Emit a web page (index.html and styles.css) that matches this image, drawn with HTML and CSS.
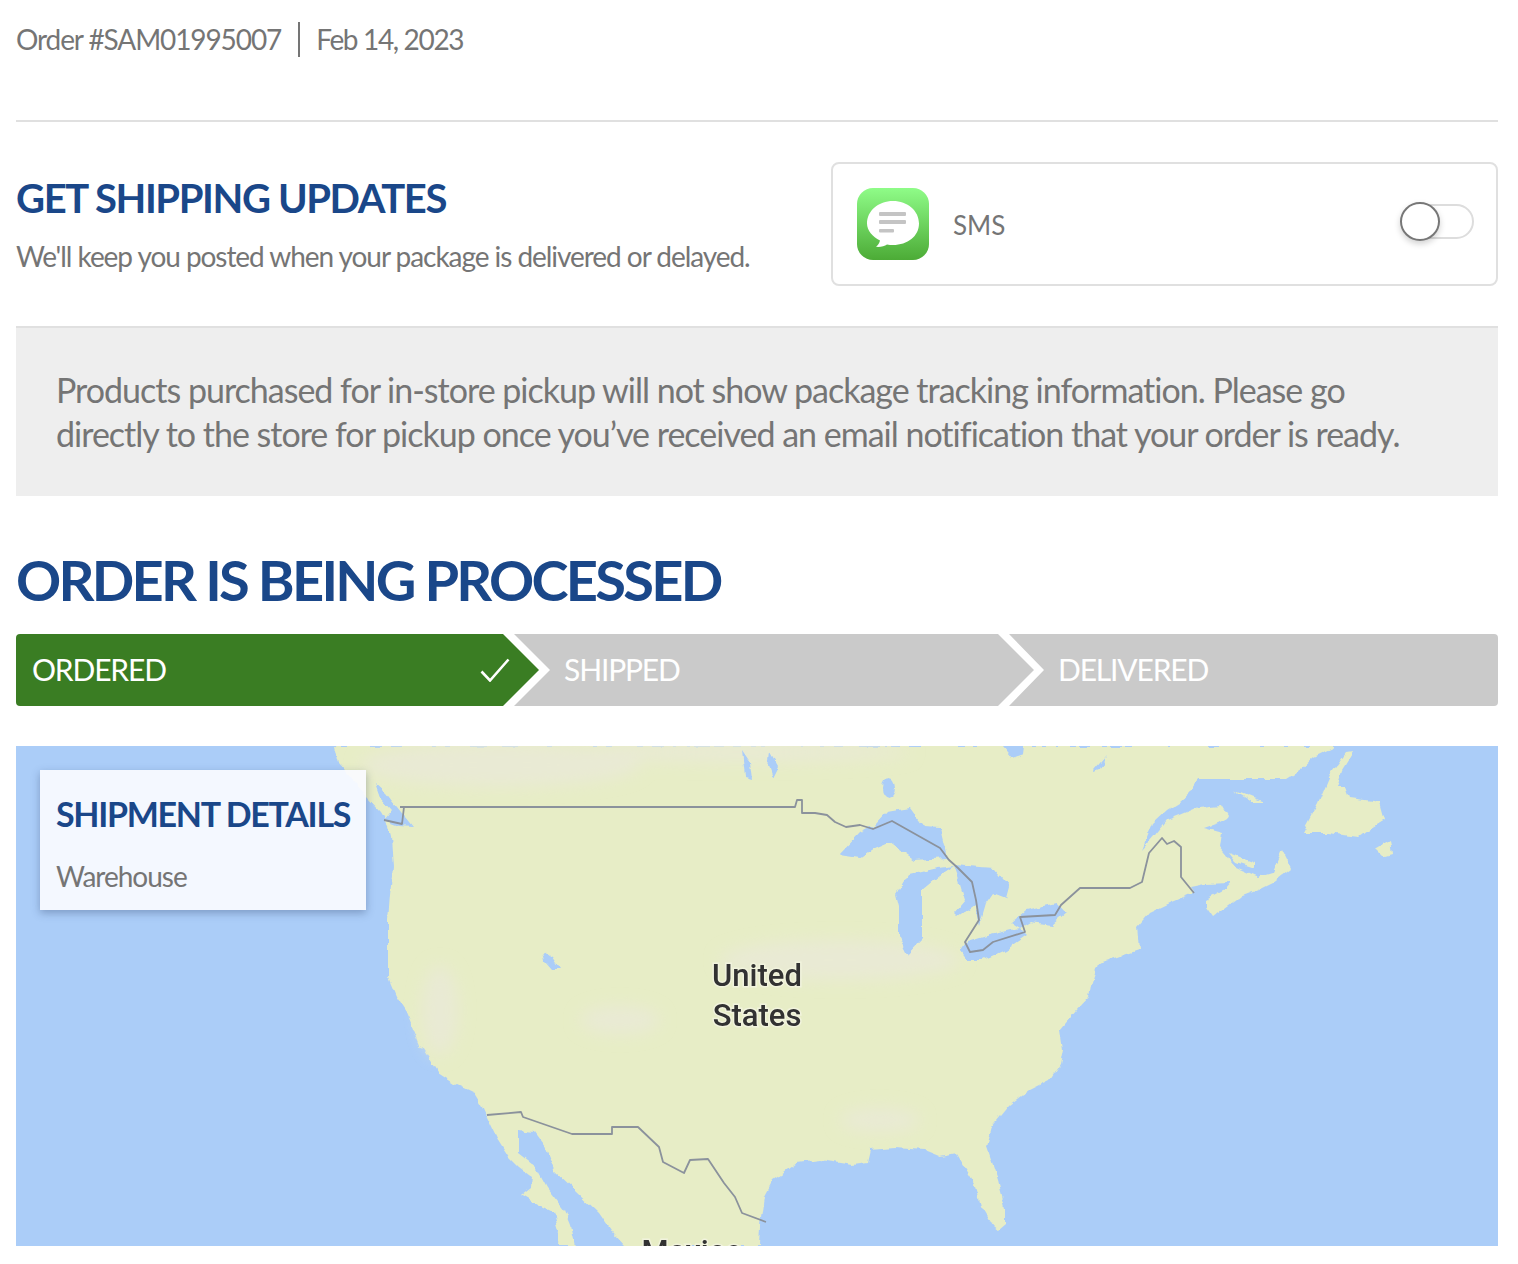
FILE: index.html
```html
<!DOCTYPE html>
<html lang="en">
<head>
<meta charset="utf-8">
<title>Order status</title>
<link rel="stylesheet" href="styles.css">
</head>
<body>
<main class="page">
  <header class="order-row">
    <span class="order-id">Order #SAM01995007</span>
    <span class="order-date">Feb 14, 2023</span>
  </header>

  <section class="updates">
    <div class="updates-text">
      <h2 class="updates-title">GET SHIPPING UPDATES</h2>
      <p class="updates-sub">We'll keep you posted when your package is delivered or delayed.</p>
    </div>
    <div class="sms-card">
      <svg class="sms-icon" viewBox="0 0 72 72" aria-hidden="true">
        <defs>
          <linearGradient id="smsGrad" x1="0" y1="0" x2="0" y2="1">
            <stop offset="0" stop-color="#8ffc88"/>
            <stop offset="1" stop-color="#4cab36"/>
          </linearGradient>
        </defs>
        <rect width="72" height="72" rx="16" fill="url(#smsGrad)"/>
        <path d="M36 13c14.500 0 26 9.800 26 22.500S50.500 57 36 57c-2 0-4-.2-6-.6-2.500 1.800-6.500 2.800-11 2.400 2-1.400 3.500-3.800 4-6.300C15.500 48.600 10 42.500 10 35.500 10 22.800 21.500 13 36 13z" fill="#fff"/>
        <rect x="22" y="24" width="27" height="4" rx="1" fill="#c4c4c4"/>
        <rect x="22" y="32" width="27" height="4" rx="1" fill="#c4c4c4"/>
        <rect x="22" y="41" width="15" height="3.500" rx="1" fill="#c4c4c4"/>
      </svg>
      <span class="sms-label">SMS</span>
      <span class="toggle"><span class="toggle-knob"></span></span>
    </div>
  </section>

  <p class="notice">Products purchased for in-store pickup will not show package tracking information. Please go directly to the store for pickup once you’ve received an email notification that your order is ready.</p>

  <h1 class="status-title">ORDER IS BEING PROCESSED</h1>

  <div class="stepper">
    <div class="step step-first">
      <span>ORDERED</span>
      <svg class="step-check" viewBox="0 0 30 24" aria-hidden="true"><path d="M1.500 13.500 10 22.500 28.500 1.500" fill="none" stroke="#fff" stroke-width="2.600"/></svg>
    </div>
    <div class="step step-mid"><span>SHIPPED</span></div>
    <div class="step step-last"><span>DELIVERED</span></div>
  </div>

  <div class="map">
    <svg class="map-art" viewBox="16 746 1482 500" aria-hidden="true">
      <defs>
        <filter id="soft" x="-5%" y="-5%" width="110%" height="110%">
          <feTurbulence type="fractalNoise" baseFrequency="0.09" numOctaves="2" seed="4" result="n"/>
          <feDisplacementMap in="SourceGraphic" in2="n" scale="7" xChannelSelector="R" yChannelSelector="G"/>
          <feGaussianBlur stdDeviation="0.7"/>
        </filter>
        <filter id="softer" x="-30%" y="-30%" width="160%" height="160%"><feGaussianBlur stdDeviation="8"/></filter>
        <filter id="line" x="-5%" y="-5%" width="110%" height="110%"><feGaussianBlur stdDeviation="0.6"/></filter>
      </defs>
      <g filter="url(#soft)">
        <path class="land" d="M335 746 339 763 352 778 366 797 380 812 388 826 391 837 393 867 390 895 388 920 388 960 388 977 396 996 407 1013 420 1045 438 1073 455 1084 474 1093 482 1106 487 1117 497 1138 509 1157 520 1168 532 1177 531 1187 521 1195 538 1205 554 1213 559 1230 558 1246 576 1246 571 1225 565 1210 547 1187 536 1167 518 1153 518 1130 534 1132 545 1147 554 1170 575 1190 599 1213 612 1232 625 1246 759 1246 760 1225 764 1197 773 1180 785 1172 797 1163 820 1160 840 1163 853 1165 868 1163 871 1150 895 1148 925 1150 940 1156 956 1153 966 1170 974 1183 980 1205 992 1225 998 1230 1005 1224 1005 1207 998 1180 987 1147 992 1127 1010 1105 1030 1090 1050 1080 1060 1065 1063 1050 1060 1030 1075 1012 1089 997 1091 985 1098 963 1115 958 1139 950 1137 927 1149 913 1170 903 1194 893 1190 887 1205 884 1231 883 1225 890 1206 900 1206 907 1213 917 1225 908 1240 897 1258 890 1272 883 1291 868 1282 850 1272 873 1259 877 1236 867 1220 847 1222 833 1204 828 1218 823 1229 817 1222 805 1199 807 1180 815 1167 820 1155 835 1142 850 1153 823 1167 810 1180 802 1190 793 1199 779 1240 779 1286 779 1300 770 1314 757 1337 746Z"/>
        <path class="land" d="M1302 833 1318 803 1330 775 1346 753 1353 752 1342 770 1337 787 1346 787 1350 798 1380 802 1385 820 1372 828 1360 837 1327 833Z"/>
        <path class="land" d="M1376 848 1390 840 1392 855 1385 857Z"/>
        <path class="land" d="M1233 790 1263 802 1252 802Z"/>
        <path class="land" d="M1229 853 1254 863 1254 868 1236 862Z"/>
      </g>
      <g class="tan" filter="url(#softer)">
        <ellipse cx="500" cy="765" rx="140" ry="22"/>
        <ellipse cx="740" cy="752" rx="170" ry="10"/>
        <ellipse cx="840" cy="960" rx="120" ry="20"/>
        <ellipse cx="440" cy="1010" rx="18" ry="45"/>
        <ellipse cx="620" cy="1020" rx="40" ry="14"/>
        <ellipse cx="880" cy="1120" rx="40" ry="12"/>
      </g>
      <g class="water" filter="url(#soft)">
        <path d="M839 855 860 833 875 825 887 812 910 808 924 827 940 828 947 858 915 860 889 842 875 848 860 858Z"/>
        <path d="M896 895 908 875 938 868 954 866 940 875 922 890 922 940 908 955 899 937 899 907Z"/>
        <path d="M954 865 993 868 1009 887 1006 898 993 893 986 903 979 927 975 905 958 917 954 913 965 900 958 877Z"/>
        <path d="M961 952 967 942 990 935 1020 928 1027 935 1005 950 983 960 967 960Z"/>
        <path d="M1011 922 1025 910 1057 903 1066 913 1052 925 1030 922 1020 928Z"/>
        <ellipse cx="889" cy="788" rx="7" ry="10"/>
        <path d="M1002 746 1025 746 1024 754 1012 758Z"/>
        <path d="M1094 770 1106 756 1100 770 1095 772Z"/>
        <path d="M742 750 750 762 752 778 745 776Z"/>
        <path d="M770 752 778 766 772 778 768 766Z"/>
        <path d="M375 783 385 792 397 807 413 827 400 826 384 820 392 810 380 797Z"/>
        <path d="M543 952 552 958 560 970 552 970 545 962Z"/>
      </g>
      <g filter="url(#line)">
        <path class="border" d="M400 807H795L797 800 802 800 802 813 815 813 827 815 835 822 846 827 860 825 873 829 892 821 940 848 949 860 958 868 972 882 976 900 979 920 965 942 970 952 983 950 993 942 1025 932 1020 917 1055 915 1061 905 1080 888H1130L1142 882 1149 853 1162 838 1167 844 1174 841 1181 847V877L1194 893"/>
        <path class="border" d="M404 807 402 824 384 820"/>
        <path class="border" d="M487 1115 521 1112 523 1117 572 1134H612V1127H638L659 1147 663 1162 684 1173 690 1160 708 1159 724 1183 735 1197 742 1213 766 1222"/>
      </g>
      <g class="map-labels" filter="url(#line)">
        <text x="757" y="986">United</text>
        <text x="757" y="1026">States</text>
        <text x="692" y="1262">Mexico</text>
      </g>
    </svg>
    <aside class="ship-card">
      <h3 class="ship-title">SHIPMENT DETAILS</h3>
      <p class="ship-place">Warehouse</p>
    </aside>
  </div>
</main>
</body>
</html>
```
FILE: styles.css
```css
* { box-sizing: border-box; }

html, body { margin: 0; background: #fff; }

body {
  font-family: "Lato", "Liberation Sans", sans-serif;
  color: #757575;
}

.page {
  padding: 0 20px 18px 16px;
}

.order-row {
  display: flex;
  align-items: stretch;
  padding: 22px 0 63px;
  border-bottom: 2px solid #e0e0e0;
  font-size: 28px;
  line-height: 35px;
  letter-spacing: -1.1px;
}

.order-id {
  padding-right: 17px;
  border-right: 2px solid #757575;
}

.order-date {
  padding-left: 16px;
  letter-spacing: -1.35px;
}

.updates {
  display: flex;
  justify-content: space-between;
  padding: 40px 0;
  border-bottom: 2px solid #e0e0e0;
}

.updates-text { padding-top: 12px; }

.updates-title {
  margin: 0;
  font-size: 40px;
  line-height: 48px;
  font-weight: 700;
  letter-spacing: -1.4px;
  color: #1a4789;
}

.updates-sub {
  margin: 14px 0 0;
  font-size: 28px;
  line-height: 40px;
  letter-spacing: -1.05px;
}

.sms-card {
  display: flex;
  align-items: center;
  width: 667px;
  height: 124px;
  padding: 0 22px 0 24px;
  border: 2px solid #e0e0e0;
  border-radius: 8px;
}

.sms-icon {
  width: 72px;
  height: 72px;
  flex: none;
}

.sms-label {
  margin-left: 24px;
  margin-top: 2px;
  font-size: 26px;
}

.toggle {
  position: relative;
  width: 64px;
  height: 35px;
  margin-left: auto;
  margin-top: -5px;
  border: 2px solid #ddd;
  border-radius: 18px;
}

.toggle-knob {
  position: absolute;
  left: -12px;
  top: -4px;
  width: 40px;
  height: 39px;
  background: #fff;
  border: 2px solid #777;
  border-radius: 50%;
  box-shadow: 0 3px 6px rgba(0, 0, 0, 0.18);
}

.notice {
  margin: 0;
  padding: 40px 90px 40px 40px;
  background: #eee;
  font-size: 34px;
  line-height: 44px;
  letter-spacing: -1px;
}

.status-title {
  margin: 39px 0 9px;
  font-size: 56px;
  line-height: 90px;
  font-weight: 700;
  letter-spacing: -2.75px;
  color: #1a4789;
}

.stepper {
  display: flex;
  height: 72px;
  font-size: 30px;
  letter-spacing: -1.15px;
  color: #fff;
}

.step {
  display: flex;
  align-items: center;
  height: 72px;
  padding-bottom: 2px;
  background: #cacaca;
}

.step-first {
  flex: none;
  width: 523px;
  justify-content: space-between;
  padding: 0 29px 2px 16px;
  background: #3a7d23;
  border-radius: 4px 0 0 4px;
  clip-path: polygon(0 0, calc(100% - 36px) 0, 100% 50%, calc(100% - 36px) 100%, 0 100%);
}

.step-check {
  width: 30px;
  height: 24px;
  margin-top: 2px;
}

.step-mid {
  flex: none;
  width: 520px;
  margin-left: -25px;
  padding-left: 50px;
  clip-path: polygon(0 0, calc(100% - 36px) 0, 100% 50%, calc(100% - 36px) 100%, 0 100%, 36px 50%);
}

.step-last {
  flex: 1;
  margin-left: -25px;
  padding-left: 49px;
  border-radius: 0 4px 4px 0;
  clip-path: polygon(0 0, 100% 0, 100% 100%, 0 100%, 35px 50%);
}

.map {
  position: relative;
  height: 500px;
  margin-top: 40px;
  background: #abcdf8;
  overflow: hidden;
}

.map-art {
  display: block;
  width: 100%;
  height: 100%;
}

.land { fill: #e7edc6; }
.tan { fill: #e9ead4; }
.water { fill: #abcdf8; }

.border {
  fill: none;
  stroke: #8b929c;
  stroke-width: 1.800;
  stroke-linejoin: round;
}

.map-labels {
  font-family: "Roboto", "Liberation Sans", sans-serif;
  font-size: 31px;
  font-weight: 500;
  fill: #303030;
  text-anchor: middle;
  stroke: #f1f3dd;
  stroke-width: 3px;
  paint-order: stroke;
}

.ship-card {
  position: absolute;
  left: 24px;
  top: 24px;
  width: 326px;
  height: 140px;
  padding: 23px 0 0 16px;
  background: rgba(250, 251, 255, 0.93);
  box-shadow: 0 3px 8px rgba(40, 60, 100, 0.35);
}

.ship-title {
  margin: 0;
  font-size: 34px;
  line-height: 42px;
  font-weight: 700;
  letter-spacing: -1.3px;
  white-space: nowrap;
  color: #1a4789;
}

.ship-place {
  margin: 21px 0 0;
  font-size: 28px;
  line-height: 40px;
  letter-spacing: -1px;
}
```
